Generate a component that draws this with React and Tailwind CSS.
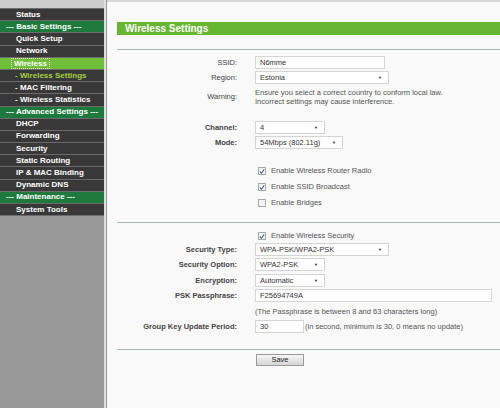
import React from "react";

const menu = [
  { label: "Status", kind: "item" },
  { label: "--- Basic Settings ---", kind: "section" },
  { label: "Quick Setup", kind: "item" },
  { label: "Network", kind: "item" },
  { label: "Wireless", kind: "active" },
  { label: "- Wireless Settings", kind: "subActive" },
  { label: "- MAC Filtering", kind: "sub" },
  { label: "- Wireless Statistics", kind: "sub" },
  { label: "--- Advanced Settings ---", kind: "section" },
  { label: "DHCP", kind: "item" },
  { label: "Forwarding", kind: "item" },
  { label: "Security", kind: "item" },
  { label: "Static Routing", kind: "item" },
  { label: "IP & MAC Binding", kind: "item" },
  { label: "Dynamic DNS", kind: "item" },
  { label: "--- Maintenance ---", kind: "section" },
  { label: "System Tools", kind: "item" },
];

const MenuRow = ({ label, kind }) => {
  if (kind === "section") {
    return (
      <div className="h-[12.2px] flex items-center pl-[6px] bg-[#1e7a3c] text-white border-b border-[#6b6b6b]">
        {label}
      </div>
    );
  }
  if (kind === "active") {
    return (
      <div className="h-[12.2px] flex items-center pl-[11px] bg-[#6fbf3a] text-white border-b border-[#6b6b6b]">
        <span className="px-[2px] leading-[9px] border border-dotted border-[#f2f2c0]">{label}</span>
      </div>
    );
  }
  return (
    <div
      className={
        "h-[12.2px] flex items-center bg-[#383838] border-b border-[#6b6b6b] " +
        (kind === "subActive"
          ? "pl-[15px] text-[#a6d13f]"
          : kind === "sub"
          ? "pl-[15px] text-white"
          : "pl-[16px] text-white")
      }
    >
      {label}
    </div>
  );
};

const Select = ({ value, width }) => (
  <div
    className="h-[13px] bg-white border border-[#d4d4d4] flex items-center justify-between pl-[4px] pr-[6px] text-[#333]"
    style={{ width }}
  >
    <span>{value}</span>
    <span className="text-[4px] text-[#222]">▼</span>
  </div>
);

const Input = ({ value, width }) => (
  <div
    className="h-[13px] bg-white border border-[#d6d6d6] flex items-center pl-[4px] text-[#333]"
    style={{ width }}
  >
    {value}
  </div>
);

const Check = ({ checked, label }) => (
  <div className="h-[16px] flex items-center pl-[3px] text-[#555]">
    <span className="w-[8px] h-[8px] border border-[#a9a9a9] bg-[#f4f4f4] flex items-center justify-center mr-[5px]">
      {checked && (
        <svg width="7" height="7" viewBox="0 0 7 7">
          <path d="M1 3.6 L2.8 5.5 L6 1.2" fill="none" stroke="#3d5a8a" strokeWidth="1.3" />
        </svg>
      )}
    </span>
    {label}
  </div>
);

const Row = ({ label, bold, children, className = "" }) => (
  <div className={"flex items-center h-[15px] " + className}>
    <div className={"w-[130px] shrink-0 text-right text-[#444] " + (bold ? "font-bold" : "")}>{label}</div>
    <div className="ml-[18px] flex items-center">{children}</div>
  </div>
);

export default function App() {
  return (
    <div
      className="w-[500px] h-[408px] flex overflow-hidden text-[7.5px] bg-[#f9f9f9]"
      style={{ fontFamily: '"Liberation Sans", Arial, sans-serif' }}
    >
      <div className="w-[104px] shrink-0 bg-[#999999] flex flex-col">
        <div className="h-[9px] bg-[#cccccc] border-b border-[#6b6b6b]"></div>
        <div className="font-bold text-[8px]">
          {menu.map((m) => (
            <MenuRow key={m.label} {...m} />
          ))}
        </div>
      </div>
      <div className="w-[3px] shrink-0 bg-[#e0e0e0] border-r border-[#9a9a9a]"></div>
      <div className="flex-1 border-t-[2px] border-[#d8d8d8] pt-[20px]">
        <div className="ml-[10px] h-[13px] bg-[#66b632] flex items-center pl-[8px] text-white font-bold text-[10px]">
          Wireless Settings
        </div>
        <div className="ml-[10px] mt-[14px] h-px bg-[#a7b9ad]"></div>

        <Row label="SSID:" className="mt-[5px]">
          <Input value="N6mme" width="130px" />
        </Row>
        <Row label="Region:">
          <Select value="Estonia" width="134px" />
        </Row>
        <div className="flex mt-[3px] h-[17px]">
          <div className="w-[130px] shrink-0 text-right text-[#444] leading-[17px]">Warning:</div>
          <div className="ml-[18px] text-[#555] leading-[9px]">
            <div>Ensure you select a correct country to conform local law.</div>
            <div>Incorrect settings may cause interference.</div>
          </div>
        </div>

        <Row label="Channel:" bold className="mt-[15px]">
          <Select value="4" width="70px" />
        </Row>
        <Row label="Mode:" bold>
          <Select value="54Mbps (802.11g)" width="88px" />
        </Row>

        <div className="ml-[148px] mt-[13px]">
          <Check checked label="Enable Wireless Router Radio" />
          <Check checked label="Enable SSID Broadcast" />
          <Check label="Enable Bridges" />
        </div>

        <div className="ml-[10px] mt-[11px] h-px bg-[#a7b9ad]"></div>

        <div className="ml-[148px] mt-[5px]">
          <Check checked label="Enable Wireless Security" />
        </div>
        <Row label="Security Type:" bold className="mt-[-2px]">
          <Select value="WPA-PSK/WPA2-PSK" width="134px" />
        </Row>
        <Row label="Security Option:" bold>
          <Select value="WPA2-PSK" width="70px" />
        </Row>
        <Row label="Encryption:" bold className="mt-[1px]">
          <Select value="Automatic" width="70px" />
        </Row>
        <Row label="PSK Passphrase:" bold>
          <Input value="F25694749A" width="237px" />
        </Row>
        <Row label="" className="mt-[1px]">
          <span className="text-[#555]">(The Passphrase is between 8 and 63 characters long)</span>
        </Row>
        <Row label="Group Key Update Period:" bold>
          <Input value="30" width="49px" />
          <span className="ml-[1px] text-[#555]">(in second, minimum is 30, 0 means no update)</span>
        </Row>

        <div className="ml-[10px] mt-[15px] h-px bg-[#a7b9ad]"></div>

        <div className="ml-[149px] mt-[4px]">
          <button className="w-[48px] h-[12px] border border-[#9a9a9a] bg-gradient-to-b from-[#f6f6f6] to-[#d6d6d6] text-[7.5px] text-[#222] leading-none">
            Save
          </button>
        </div>
      </div>
    </div>
  );
}
